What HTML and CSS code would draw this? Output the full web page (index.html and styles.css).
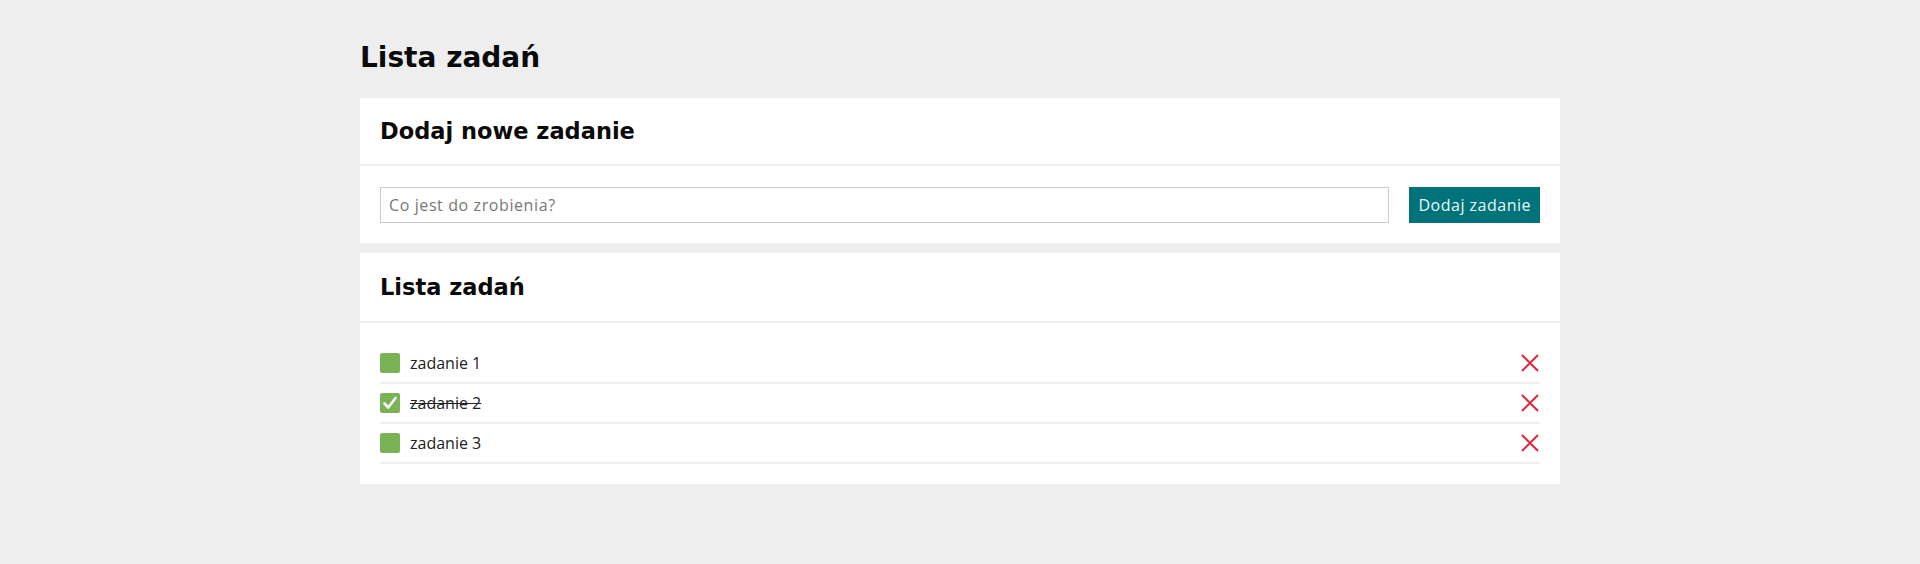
FILE: index.html
```html
<!DOCTYPE html>
<html lang="pl">
<head>
<meta charset="utf-8">
<title>Lista zadań</title>
<link rel="stylesheet" href="styles.css">
</head>
<body>
<div class="container">
  <h1 class="page-title">Lista zadań</h1>
  <section class="card">
    <header class="card-header"><h2>Dodaj nowe zadanie</h2></header>
    <div class="card-body add-form">
      <input class="task-input" type="text" placeholder="Co jest do zrobienia?">
      <button class="btn-add">Dodaj zadanie</button>
    </div>
  </section>
  <section class="card">
    <header class="card-header card-header-tall"><h2>Lista zadań</h2></header>
    <div class="card-body">
      <ul class="task-list">
        <li class="task">
          <span class="check"></span>
          <span class="task-name">zadanie 1</span>
          <svg class="del" viewBox="0 0 18 18"><path d="M1 1L17 17M17 1L1 17"/></svg>
        </li>
        <li class="task done">
          <span class="check"><svg viewBox="0 0 20 20"><path d="M4.5 10.5L8.3 14.5L15.5 5"/></svg></span>
          <span class="task-name">zadanie 2</span>
          <svg class="del" viewBox="0 0 18 18"><path d="M1 1L17 17M17 1L1 17"/></svg>
        </li>
        <li class="task">
          <span class="check"></span>
          <span class="task-name">zadanie 3</span>
          <svg class="del" viewBox="0 0 18 18"><path d="M1 1L17 17M17 1L1 17"/></svg>
        </li>
      </ul>
    </div>
  </section>
</div>
</body>
</html>
```
FILE: styles.css
```css
* { box-sizing: border-box; }
body {
  margin: 0;
  background: #eeeeee;
  font-family: "Open Sans", "DejaVu Sans", sans-serif;
  color: #111;
}
.container {
  width: 1200px;
  margin: 0 auto;
  padding-top: 40px;
}
.page-title {
  margin: 0 0 22px;
  font-family: "DejaVu Sans", "Open Sans", sans-serif;
  font-size: 28px;
  line-height: 36px;
  font-weight: 700;
  color: #0a0a0a;
}
.card {
  background: #fff;
  margin-bottom: 10px;
}
.card-header {
  padding: 20px 20px 19px;
  border-bottom: 2px solid #eeeeee;
}
.card-header-tall {
  padding-top: 21px;
  padding-bottom: 20px;
}
.card-header h2 {
  margin: 0;
  font-family: "DejaVu Sans", "Open Sans", sans-serif;
  font-size: 22.5px;
  line-height: 27px;
  font-weight: 700;
  color: #0a0a0a;
}
.card-body {
  padding: 21px 20px 20px;
}
.add-form {
  display: flex;
  gap: 20px;
}
.task-input {
  flex: 1;
  height: 36px;
  border: 1px solid #cccccc;
  padding: 0 8px;
  font-family: inherit;
  font-size: 16px;
  letter-spacing: 0.6px;
  color: #333;
  outline: none;
}
.task-input::placeholder { color: #777; }
.btn-add {
  height: 36px;
  border: none;
  background: #00727a;
  color: #e8f6f6;
  font-family: inherit;
  font-size: 16px;
  letter-spacing: 0.5px;
  padding: 0 9px;
  cursor: pointer;
}
.task-list {
  list-style: none;
  margin: 0;
  padding: 0;
}
.task {
  display: flex;
  align-items: center;
  height: 40px;
  border-bottom: 2px solid #eeeeee;
}
.check {
  width: 20px;
  height: 20px;
  border-radius: 2px;
  background: #7ab356;
  margin-right: 10px;
  display: flex;
}
.check svg {
  width: 20px;
  height: 20px;
  fill: none;
  stroke: #fff;
  stroke-width: 2.6;
  stroke-linecap: round;
  stroke-linejoin: round;
}
.task-name {
  flex: 1;
  font-size: 16px;
  font-weight: 400;
  color: #222;
}
.done .task-name { text-decoration: line-through; }
.del {
  width: 18px;
  height: 18px;
  fill: none;
  stroke: #dc2f45;
  stroke-width: 2.2;
  margin-right: 1px;
}
```
